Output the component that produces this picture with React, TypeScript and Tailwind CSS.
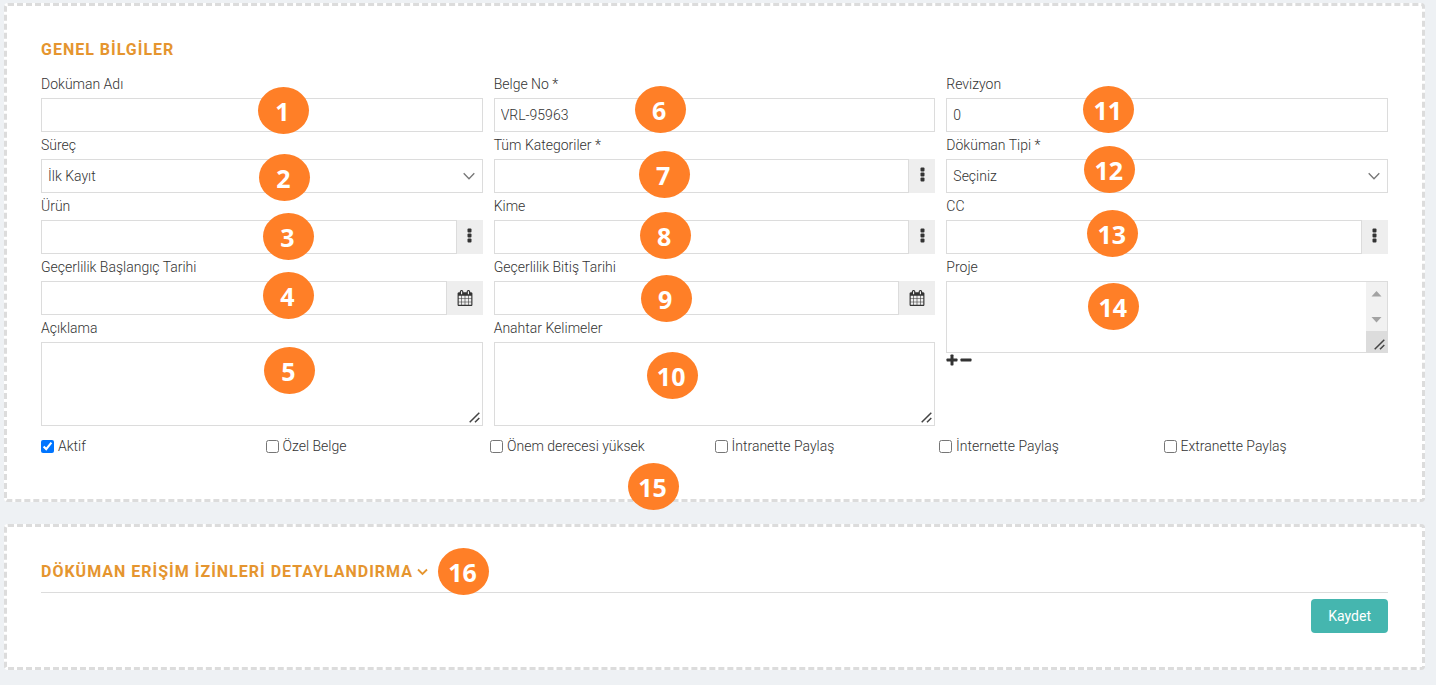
import { ReactNode, useState } from "react";

const control =
  "block h-[34px] w-full min-w-0 border border-[#dcdcdc] bg-white px-1.5 text-sm text-[#333] outline-none focus:border-gray-400";

function Badge({ no, className }: { no: number; className: string }) {
  return (
    <span
      className={`pointer-events-none flex h-[47px] w-[51px] shrink-0 items-center justify-center rounded-[50%] bg-[#ff7f27] pt-0.5 pr-0.5 font-['Noto_Sans',sans-serif] text-[25px] leading-none font-bold text-white ${className}`}
    >
      {no}
    </span>
  );
}

function DotsIcon() {
  return (
    <svg width="5" height="15" viewBox="0 0 5 15" fill="currentColor" aria-hidden="true">
      <rect x="0.5" y="0.5" width="4" height="4" rx="1" />
      <rect x="0.5" y="5.5" width="4" height="4" rx="1" />
      <rect x="0.5" y="10.5" width="4" height="4" rx="1" />
    </svg>
  );
}

function CalendarIcon() {
  return (
    <svg width="16" height="16" viewBox="0 0 1792 1792" fill="currentColor" aria-hidden="true">
      <path d="M192 1664h288v-288h-288v288zm352 0h320v-288h-320v288zm-352-352h288v-320h-288v320zm352 0h320v-320h-320v320zm-352-384h288v-288h-288v288zm736 736h320v-288h-320v288zm-384-736h320v-288h-320v288zm768 736h288v-288h-288v288zm-384-352h320v-320h-320v320zm-352-864v-288q0-13-9.5-22.5t-22.5-9.5h-64q-13 0-22.5 9.5t-9.5 22.5v288q0 13 9.5 22.5t22.5 9.5h64q13 0 22.5-9.5t9.5-22.5zm736 864h288v-320h-288v320zm-384-384h320v-288h-320v288zm384 0h288v-288h-288v288zm32-480v-288q0-13-9.5-22.5t-22.5-9.5h-64q-13 0-22.5 9.5t-9.5 22.5v288q0 13 9.5 22.5t22.5 9.5h64q13 0 22.5-9.5t9.5-22.5zm384-64v1280q0 52-38 90t-90 38h-1408q-52 0-90-38t-38-90v-1280q0-52 38-90t90-38h128v-96q0-66 47-113t113-47h64q66 0 113 47t47 113v96h384v-96q0-66 47-113t113-47h64q66 0 113 47t47 113v96h128q52 0 90 38t38 90z" />
    </svg>
  );
}

type FieldProps = {
  id: string;
  label: string;
  no: number;
  badge: string;
  children: ReactNode;
};

function Field({ id, label, no, badge, children }: FieldProps) {
  return (
    <div className="relative">
      <label htmlFor={id} className="block text-sm leading-[27px]">
        {label}
      </label>
      {children}
      <Badge no={no} className={`absolute ${badge}`} />
    </div>
  );
}

function SelectBox({ id, option }: { id: string; option: string }) {
  return (
    <div className="relative">
      <select id={id} className={`${control} appearance-none pr-8`}>
        <option>{option}</option>
      </select>
      <svg
        className="pointer-events-none absolute top-[13px] right-2"
        width="12"
        height="9"
        viewBox="0 0 12 9"
        fill="none"
        stroke="#777"
        strokeWidth="1.3"
        aria-hidden="true"
      >
        <path d="M0.7 1.2 L6 6.8 L11.3 1.2" />
      </svg>
    </div>
  );
}

function PickerInput({ id }: { id: string }) {
  return (
    <div className="flex">
      <input id={id} type="text" className={control} />
      <button
        type="button"
        aria-label="Seç"
        className="flex w-[26px] shrink-0 items-center justify-center bg-[#eee] pb-1"
      >
        <DotsIcon />
      </button>
    </div>
  );
}

function DateInput({ id }: { id: string }) {
  return (
    <div className="flex">
      <input id={id} type="text" className={control} />
      <button
        type="button"
        aria-label="Takvim"
        className="flex w-9 shrink-0 items-center justify-center bg-[#eee]"
      >
        <CalendarIcon />
      </button>
    </div>
  );
}

function ResizeGrip({ className }: { className: string }) {
  return (
    <svg
      className={`pointer-events-none absolute ${className}`}
      width="11"
      height="11"
      viewBox="0 0 11 11"
      stroke="#444"
      strokeWidth="1.5"
      aria-hidden="true"
    >
      <path d="M0.7 10.3 L10.3 0.7 M6 10.3 L10.3 6" />
    </svg>
  );
}

function TextArea({ id }: { id: string }) {
  return (
    <div className="relative">
      <textarea
        id={id}
        className="block h-[84px] w-full resize-none border border-[#dcdcdc] bg-white p-1.5 text-sm outline-none focus:border-gray-400"
      />
      <ResizeGrip className="right-[3px] bottom-[3px]" />
    </div>
  );
}

function ProjectList({ id }: { id: string }) {
  return (
    <>
      <div className="relative">
        <select
          id={id}
          multiple
          className="block h-[72px] w-full border border-[#dcdcdc] bg-white outline-none"
        />
        <div className="absolute inset-y-px right-px flex w-[21px] flex-col bg-[#f1f1f1]" aria-hidden="true">
          <svg className="w-full flex-1" viewBox="0 0 21 49" fill="#a3a3a3">
            <path d="M5.5 14.5 L10.5 9 L15.5 14.5 Z M5.5 35 L15.5 35 L10.5 40.5 Z" />
          </svg>
          <div className="h-[21px] bg-[#dcdcdc]" />
        </div>
        <ResizeGrip className="right-[3px] bottom-[3px]" />
      </div>
      <div className="flex gap-0.5 pt-px">
        <button type="button" aria-label="Ekle">
          <svg width="12" height="12" viewBox="0 0 12 12" fill="currentColor">
            <rect x="0.5" y="4.5" width="11" height="3" rx="0.7" />
            <rect x="4.5" y="0.5" width="3" height="11" rx="0.7" />
          </svg>
        </button>
        <button type="button" aria-label="Çıkar">
          <svg width="12" height="12" viewBox="0 0 12 12" fill="currentColor">
            <rect x="0.5" y="4.5" width="11" height="3" rx="0.7" />
          </svg>
        </button>
      </div>
    </>
  );
}

const flags = [
  { id: "aktif", label: "Aktif" },
  { id: "ozel", label: "Özel Belge" },
  { id: "onem", label: "Önem derecesi yüksek" },
  { id: "intranet", label: "İntranette Paylaş" },
  { id: "internet", label: "İnternette Paylaş" },
  { id: "extranet", label: "Extranette Paylaş" },
];

const panel = "relative rounded border-[3px] border-dashed border-[#dcdcdc] bg-white px-[34px]";
const title = "text-base leading-6 font-bold tracking-[1px] text-[#e5952f]";

export default function App() {
  const [checked, setChecked] = useState<string[]>(["aktif"]);

  const toggle = (id: string) =>
    setChecked((prev) => (prev.includes(id) ? prev.filter((x) => x !== id) : [...prev, id]));

  return (
    <main
      lang="tr"
      className="min-h-screen bg-[#eef1f4] pt-[3px] pr-[11px] pb-4 pl-1 font-[Roboto,sans-serif] text-sm font-light text-[#333]"
    >
      <form onSubmit={(e) => e.preventDefault()}>
        <section className={`${panel} pt-8 pb-[41px]`}>
          <h2 className={title}>GENEL BİLGİLER</h2>

          <div className="mt-[9px] grid grid-cols-3 gap-[11px]">
            <div>
              <Field id="ad" label="Doküman Adı" no={1} badge="left-[217px] top-4">
                <input id="ad" type="text" className={control} />
              </Field>
              <Field id="surec" label="Süreç" no={2} badge="left-[218px] top-[22px]">
                <SelectBox id="surec" option="İlk Kayıt" />
              </Field>
              <Field id="urun" label="Ürün" no={3} badge="left-[222px] top-5">
                <PickerInput id="urun" />
              </Field>
              <Field id="baslangic" label="Geçerlilik Başlangıç Tarihi" no={4} badge="left-[222px] top-[18px]">
                <DateInput id="baslangic" />
              </Field>
              <Field id="aciklama" label="Açıklama" no={5} badge="left-[223px] top-8">
                <TextArea id="aciklama" />
              </Field>
            </div>

            <div>
              <Field id="belgeno" label="Belge No *" no={6} badge="left-[141px] top-[15px]">
                <input id="belgeno" type="text" defaultValue="VRL-95963" className={control} />
              </Field>
              <Field id="kategori" label="Tüm Kategoriler *" no={7} badge="left-[145px] top-[19px]">
                <PickerInput id="kategori" />
              </Field>
              <Field id="kime" label="Kime" no={8} badge="left-[146px] top-[19px]">
                <PickerInput id="kime" />
              </Field>
              <Field id="bitis" label="Geçerlilik Bitiş Tarihi" no={9} badge="left-[147px] top-[21px]">
                <DateInput id="bitis" />
              </Field>
              <Field id="anahtar" label="Anahtar Kelimeler" no={10} badge="left-[153px] top-[37px]">
                <TextArea id="anahtar" />
              </Field>
            </div>

            <div>
              <Field id="revizyon" label="Revizyon" no={11} badge="left-[137px] top-[15px]">
                <input id="revizyon" type="text" defaultValue="0" className={control} />
              </Field>
              <Field id="tip" label="Döküman Tipi *" no={12} badge="left-[138px] top-3.5">
                <SelectBox id="tip" option="Seçiniz" />
              </Field>
              <Field id="cc" label="CC" no={13} badge="left-[141px] top-[17px]">
                <PickerInput id="cc" />
              </Field>
              <Field id="proje" label="Proje" no={14} badge="left-[142px] top-[29px]">
                <ProjectList id="proje" />
              </Field>
            </div>
          </div>

          <div className="mt-2 grid grid-cols-6">
            {flags.map((f) => (
              <label key={f.id} className="flex h-6 items-center gap-1">
                <input
                  type="checkbox"
                  checked={checked.includes(f.id)}
                  onChange={() => toggle(f.id)}
                  className="size-[13px]"
                />
                {f.label}
              </label>
            ))}
          </div>
          <Badge no={15} className="absolute -bottom-[11px] left-[621px]" />
        </section>

        <section className={`${panel} mt-[22px] pt-[33px] pb-[34px]`}>
          <div className="flex items-center border-b border-[#dcdcdc] pb-2">
            <h2 className={title}>
              <button type="button" className="flex items-center gap-1 tracking-[1px]">
                DÖKÜMAN ERİŞİM İZİNLERİ DETAYLANDIRMA
                <svg width="11" height="8" viewBox="0 0 11 8" fill="none" stroke="currentColor" strokeWidth="1.8" aria-hidden="true">
                  <path d="M1 1.5 L5.5 6 L10 1.5" />
                </svg>
              </button>
            </h2>
            <Badge no={16} className="-mt-3.5 -mb-3 ml-2.5" />
          </div>
          <div className="mt-1.5 flex justify-end">
            <button
              type="submit"
              className="h-[34px] rounded bg-[#45b6af] px-[17px] text-sm font-normal text-white"
            >
              Kaydet
            </button>
          </div>
        </section>
      </form>
    </main>
  );
}
